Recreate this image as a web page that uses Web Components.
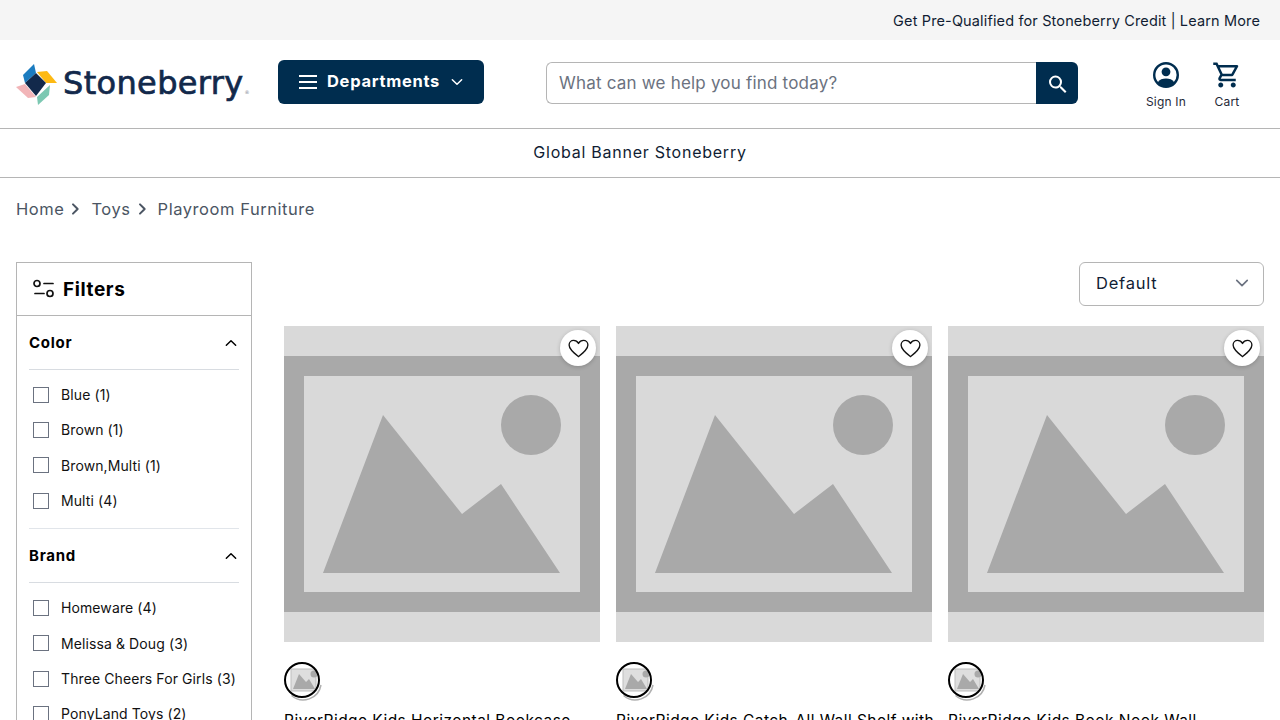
<!DOCTYPE html>
<html lang="en">
<head>
<meta charset="utf-8">
<title>Playroom Furniture</title>
<style>
  html, body { margin: 0; padding: 0; background: #fff; height: 720px; overflow: hidden; }
  body { font-family: Inter, "Liberation Sans", sans-serif; color: #111827; }
</style>
</head>
<body>
<top-bar>Get Pre-Qualified for Stoneberry Credit | Learn More</top-bar>
<site-header></site-header>
<global-banner>Global Banner Stoneberry</global-banner>
<bread-crumbs items="Home,Toys,Playroom Furniture"></bread-crumbs>
<listing-page>
  <filter-panel slot="side">
    <filter-group title="Color" items="Blue (1)|Brown (1)|Brown,Multi (1)|Multi (4)"></filter-group>
    <filter-group title="Brand" items="Homeware (4)|Melissa &amp; Doug (3)|Three Cheers For Girls (3)|PonyLand Toys (2)"></filter-group>
  </filter-panel>
  <sort-select slot="sort" value="Default"></sort-select>
  <product-card>RiverRidge Kids Horizontal Bookcase</product-card>
  <product-card>RiverRidge Kids Catch-All Wall Shelf with</product-card>
  <product-card>RiverRidge Kids Book Nook Wall</product-card>
</listing-page>

<script>
const NAVY = "#002d4f";
const chevron = (size, color, up) => `<svg width="${size}" height="${size}" viewBox="0 0 24 24" fill="none" stroke="${color}" stroke-width="2.2" stroke-linecap="round" stroke-linejoin="round"><path d="${up ? "M5 15.5l7-7 7 7" : "M5 8.5l7 7 7-7"}"/></svg>`;

class TopBar extends HTMLElement {
  constructor() {
    super();
    this.attachShadow({ mode: "open" }).innerHTML = `
      <style>
        :host { display: flex; justify-content: flex-end; align-items: center; height: 40px; padding: 0 20px; background: #f5f5f5; font-size: 14.5px; letter-spacing: .14px; color: #111d33; }
      </style><slot></slot>`;
  }
}

class SiteHeader extends HTMLElement {
  constructor() {
    super();
    this.attachShadow({ mode: "open" }).innerHTML = `
      <style>
        :host { display: flex; align-items: flex-start; height: 68px; border-bottom: 1px solid #b5b5b5; padding: 20px 0 0 16px; }
        .logo { display: flex; align-items: center; width: 262px; height: 44px; gap: 6px; flex: none; }
        .logo svg { flex: none; margin-top: 5px; }
        .word { font-family: "DejaVu Sans", sans-serif; font-size: 32px; line-height: 44px; margin-top: 10px; color: #12294b; letter-spacing: .35px; -webkit-text-stroke: .7px #12294b; white-space: nowrap; }
        .word small { font-size: 5px; letter-spacing: 0; -webkit-text-stroke: 0; color: #7b8794; margin-left: 1px; }
        .dept { display: flex; align-items: center; width: 206px; height: 44px; box-sizing: border-box; padding: 0 19px 0 21px; background: ${NAVY}; border-radius: 6px; color: #fff; font-weight: 700; font-size: 16.5px; letter-spacing: .7px; flex: none; }
        .dept span { margin: -3px 0 0 10px; flex: 1; }
        .search { display: flex; margin: 2px 0 0 62px; width: 532px; height: 42px; flex: none; }
        .field { flex: 1; display: flex; align-items: center; box-sizing: border-box; padding: 0 12px; border: 1px solid #b5b5b5; border-right: 0; border-radius: 6px 0 0 6px; color: #6b7280; font-size: 17px; letter-spacing: .2px; }
        .go { width: 42px; display: flex; align-items: center; justify-content: center; background: ${NAVY}; border-radius: 0 6px 6px 0; }
        .act { display: flex; flex-direction: column; align-items: center; width: 60px; flex: none; font-size: 12px; letter-spacing: .2px; color: #1f2937; }
        .act svg { display: block; margin-bottom: 4px; }
        .acts { display: flex; margin-left: 58px; gap: 1px; }
      </style>
      <div class="logo">
        <svg width="41" height="41" viewBox="16 64 41 41">
          <polygon points="23,75 34,64 36,73 25,83" fill="#1b7cc0"/>
          <polygon points="37,72 47,71 57,83 46,83" fill="#fdb913"/>
          <polygon points="16,87 25,84 36,97 28,98" fill="#f2b5b8"/>
          <polygon points="50,85 49,95 38,105 37,97" fill="#7cc8b2"/>
          <polygon points="36,73 46,83 36,96 25,83" fill="#12294b"/>
        </svg>
        <span class="word">Stoneberry<small>®</small></span>
      </div>
      <div class="dept">
        <svg width="18" height="14" viewBox="0 0 18 14" fill="#fff"><rect y="0" width="18" height="2"/><rect y="6" width="18" height="2"/><rect y="12" width="18" height="2"/></svg>
        <span>Departments</span>
        ${chevron(16, "#fff", false)}
      </div>
      <div class="search">
        <div class="field">What can we help you find today?</div>
        <div class="go"><svg width="24" height="24" viewBox="0 0 24 24" fill="#fff"><path d="M15.5 14h-.79l-.28-.27A6.47 6.47 0 0 0 16 9.5 6.5 6.5 0 1 0 9.5 16c1.61 0 3.09-.59 4.23-1.57l.27.28v.79l5 4.99L20.49 19l-4.99-5zm-6 0C7.01 14 5 11.99 5 9.5S7.01 5 9.5 5 14 7.01 14 9.5 11.99 14 9.5 14z" transform="translate(1 1.5)"/></svg></div>
      </div>
      <div class="acts">
        <div class="act">
          <svg width="30" height="30" viewBox="0 0 30 30"><circle cx="15" cy="15" r="11.8" fill="none" stroke="${NAVY}" stroke-width="2.4"/><circle cx="15" cy="11.8" r="4.4" fill="${NAVY}"/><path d="M6.6 22.4C8.6 19.6 11.6 18.6 15 18.6s6.4 1 8.4 3.8C21.3 25 18.3 26.2 15 26.2s-6.3-1.2-8.4-3.8z" fill="${NAVY}"/></svg>
          Sign In
        </div>
        <div class="act">
          <svg width="30" height="30" viewBox="0 0 24 24" fill="${NAVY}"><path d="M15.55 13c.75 0 1.41-.41 1.75-1.03l3.58-6.49c.37-.66-.11-1.48-.87-1.48H5.21l-.94-2H1v2h2l3.6 7.59-1.35 2.44C4.52 15.37 5.48 17 7 17h12v-2H7l1.1-2h7.45zM6.16 6h12.15l-2.76 5H8.53L6.16 6zM7 18c-1.1 0-1.99.9-1.99 2S5.9 22 7 22s2-.9 2-2-.9-2-2-2zm10 0c-1.1 0-1.99.9-1.99 2s.89 2 1.99 2 2-.9 2-2-.9-2-2-2z"/></svg>
          Cart
        </div>
      </div>`;
  }
}

class GlobalBanner extends HTMLElement {
  constructor() {
    super();
    this.attachShadow({ mode: "open" }).innerHTML = `
      <style>
        :host { display: flex; justify-content: center; align-items: center; height: 46px; padding-bottom: 2px; border-bottom: 1px solid #b5b5b5; font-size: 16px; letter-spacing: .75px; color: #111d33; }
      </style><slot></slot>`;
  }
}

class BreadCrumbs extends HTMLElement {
  connectedCallback() {
    const items = this.getAttribute("items").split(",");
    const sep = `<svg width="16" height="16" viewBox="0 0 24 24" fill="none" stroke="#4b5563" stroke-width="3" stroke-linecap="round" stroke-linejoin="round"><path d="M9 5l7 7-7 7"/></svg>`;
    this.attachShadow({ mode: "open" }).innerHTML = `
      <style>
        :host { display: flex; align-items: center; height: 84px; box-sizing: border-box; padding: 0 16px 22px; font-size: 16.5px; letter-spacing: .55px; color: #4b5563; gap: 3px; }
        svg { margin-right: 5px; }
      </style>
      ${items.map((t, i) => `<span>${t}</span>${i < items.length - 1 ? sep : ""}`).join("")}`;
  }
}

class ListingPage extends HTMLElement {
  constructor() {
    super();
    this.attachShadow({ mode: "open" }).innerHTML = `
      <style>
        :host { display: grid; grid-template-columns: 236px 1fr; column-gap: 32px; padding: 0 16px; }
        .top { display: flex; justify-content: flex-end; margin-bottom: 20px; }
        .cards { display: grid; grid-template-columns: repeat(3, 316px); gap: 16px; }
      </style>
      <div><slot name="side"></slot></div>
      <div>
        <div class="top"><slot name="sort"></slot></div>
        <div class="cards"><slot></slot></div>
      </div>`;
  }
}

class FilterPanel extends HTMLElement {
  constructor() {
    super();
    this.attachShadow({ mode: "open" }).innerHTML = `
      <style>
        :host { display: block; border: 1px solid #b5b5b5; border-bottom: 0; }
        .head { display: flex; align-items: center; gap: 8px; height: 53px; box-sizing: border-box; padding: 0 16px; border-bottom: 1px solid #b5b5b5; font-weight: 700; font-size: 19px; letter-spacing: .6px; color: #000; }
        .body { padding: 0 12px; }
      </style>
      <div class="head">
        <svg width="22" height="20" viewBox="0 0 22 20" fill="none" stroke="#111" stroke-width="1.7" stroke-linecap="round"><circle cx="4" cy="4.5" r="3"/><path d="M11 4.5h9M2 14.5h9"/><circle cx="17" cy="14.5" r="3"/></svg>
        Filters
      </div>
      <div class="body"><slot></slot></div>`;
  }
}

class FilterGroup extends HTMLElement {
  connectedCallback() {
    const items = this.getAttribute("items").split("|");
    this.attachShadow({ mode: "open" }).innerHTML = `
      <style>
        :host { display: block; border-bottom: 1px solid #e1e5ea; padding-bottom: 10px; }
        :host(:last-child) { border-bottom: 0; }
        .title { display: flex; justify-content: space-between; align-items: center; height: 53px; border-bottom: 1px solid #d8dce1; font-weight: 700; font-size: 15px; letter-spacing: .75px; color: #000; }
        ul { list-style: none; margin: 0; padding: 7px 0 0 4px; }
        li { display: flex; align-items: center; gap: 12px; height: 35.33px; font-size: 14px; letter-spacing: .1px; color: #111; white-space: nowrap; }
        i { display: block; width: 16px; height: 16px; box-sizing: border-box; border: 1px solid #6b7280; flex: none; }
      </style>
      <div class="title">${this.getAttribute("title")}${chevron(16, "#000", true)}</div>
      <ul>${items.map(t => `<li><i></i><span>${t.replace("&", "&amp;")}</span></li>`).join("")}</ul>`;
  }
}

class SortSelect extends HTMLElement {
  connectedCallback() {
    this.attachShadow({ mode: "open" }).innerHTML = `
      <style>
        :host { display: flex; align-items: center; justify-content: space-between; width: 185px; height: 44px; box-sizing: border-box; padding: 0 12px 2px 16px; border: 1px solid #b5b5b5; border-radius: 6px; font-size: 16.5px; letter-spacing: .75px; color: #111d33; }
      </style>
      ${this.getAttribute("value")}${chevron(18, "#6b7280", false)}`;
  }
}

class PlaceholderImg extends HTMLElement {
  constructor() {
    super();
    this.attachShadow({ mode: "open" }).innerHTML = `
      <style>:host { display: block; width: 316px; height: 316px; } svg { display: block; width: 100%; height: 100%; }</style>
      <svg viewBox="0 0 316 316">
        <rect width="316" height="316" fill="#d9d9d9"/>
        <rect y="30" width="316" height="256" fill="#a9a9a9"/>
        <rect x="20" y="50" width="276" height="216" fill="#d9d9d9"/>
        <circle cx="247" cy="99" r="30" fill="#a9a9a9"/>
        <polygon points="39,247 99,89 178,188 217,158 276,247" fill="#a9a9a9"/>
      </svg>`;
  }
}

class ProductCard extends HTMLElement {
  constructor() {
    super();
    this.attachShadow({ mode: "open" }).innerHTML = `
      <style>
        :host { display: block; position: relative; }
        .fav { position: absolute; top: 4px; right: 4px; width: 36px; height: 36px; border-radius: 50%; background: #fff; box-shadow: 0 1px 4px rgba(0,0,0,.2); display: flex; align-items: center; justify-content: center; }
        .swatch { display: block; margin: 20px 0 12px; overflow: visible; }
        .name { font-size: 15.5px; line-height: 22px; letter-spacing: .45px; color: #000; white-space: nowrap; }
      </style>
      <placeholder-img></placeholder-img>
      <div class="fav"><svg width="23" height="23" viewBox="0 0 24 24" fill="none" stroke="#111" stroke-width="1.4" stroke-linejoin="round"><path d="M12 20.5C6.5 16 2.2 12.6 2.2 8.3 2.2 5.5 4.4 3.6 6.9 3.6c2 0 3.9 1.1 5.1 3.1 1.2-2 3.1-3.1 5.1-3.1 2.5 0 4.7 1.9 4.7 4.7 0 4.3-4.3 7.7-9.8 12.2z"/></svg></div>
      <svg class="swatch" width="40" height="36" viewBox="0 0 40 36">
        <path d="M7.5 33.5A18 18 0 0 0 37 23" fill="none" stroke="#b0b0b0" stroke-width="1.5"/>
        <rect x="7" y="7" width="25" height="22" fill="#dedede" stroke="#bdbdbd"/>
        <polygon points="9,27 15,12 22,20 25,17 31,27" fill="#a9a9a9"/>
        <circle cx="30" cy="12" r="3.5" fill="#a9a9a9"/>
        <circle cx="18" cy="18" r="17" fill="none" stroke="#000" stroke-width="2"/>
      </svg>
      <div class="name"><slot></slot></div>`;
  }
}

customElements.define("top-bar", TopBar);
customElements.define("site-header", SiteHeader);
customElements.define("global-banner", GlobalBanner);
customElements.define("bread-crumbs", BreadCrumbs);
customElements.define("listing-page", ListingPage);
customElements.define("filter-panel", FilterPanel);
customElements.define("filter-group", FilterGroup);
customElements.define("sort-select", SortSelect);
customElements.define("placeholder-img", PlaceholderImg);
customElements.define("product-card", ProductCard);
</script>
</body>
</html>
